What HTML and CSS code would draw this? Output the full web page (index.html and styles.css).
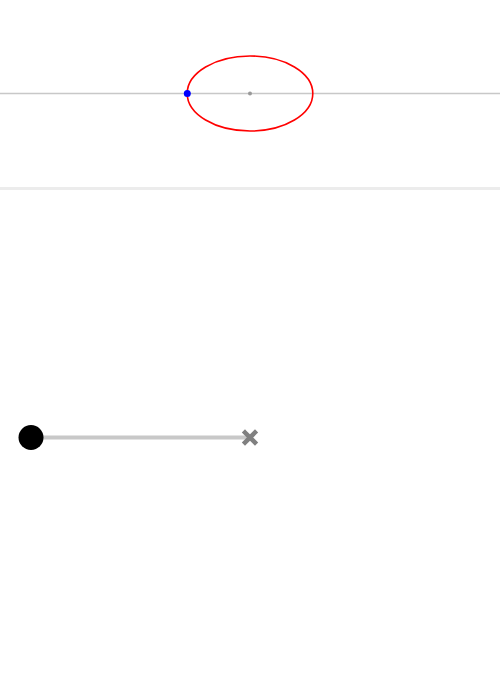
FILE: index.html
```html
<!DOCTYPE html>
<html>
<head>
<meta charset="utf-8">
<link rel="stylesheet" href="styles.css">
</head>
<body>
<div class="page">
  <section class="top">
    <svg class="canvas" width="500" height="187" viewBox="0 0 500 187">
      <line x1="0" y1="93.5" x2="500" y2="93.5" stroke="#c8c8c8" stroke-width="1.5"/>
      <ellipse cx="250" cy="93.5" rx="62.8" ry="37.5" fill="none" stroke="#ff0000" stroke-width="1.6"/>
      <circle cx="250" cy="93.5" r="2" fill="#999"/>
      <circle cx="187.3" cy="93.5" r="3.5" fill="#0000ff"/>
    </svg>
  </section>
  <section class="bottom">
    <svg class="canvas" width="500" height="498" viewBox="0 0 500 498">
      <line x1="31" y1="247.5" x2="250" y2="247.5" stroke="#c8c8c8" stroke-width="4"/>
      <circle cx="31" cy="247.5" r="12.5" fill="#000"/>
      <g stroke="#808080" stroke-width="4.5" stroke-linecap="square">
        <line x1="245" y1="242.5" x2="255" y2="252.5"/>
        <line x1="255" y1="242.5" x2="245" y2="252.5"/>
      </g>
    </svg>
  </section>
</div>
</body>
</html>
```
FILE: styles.css
```css
html, body {
  margin: 0;
  padding: 0;
  background: #fff;
}
.page {
  width: 500px;
  height: 688px;
  display: flex;
  flex-direction: column;
}
.top {
  height: 187px;
  border-bottom: 3px solid #ececec;
}
.bottom {
  flex: 1;
}
.canvas {
  display: block;
}
```
